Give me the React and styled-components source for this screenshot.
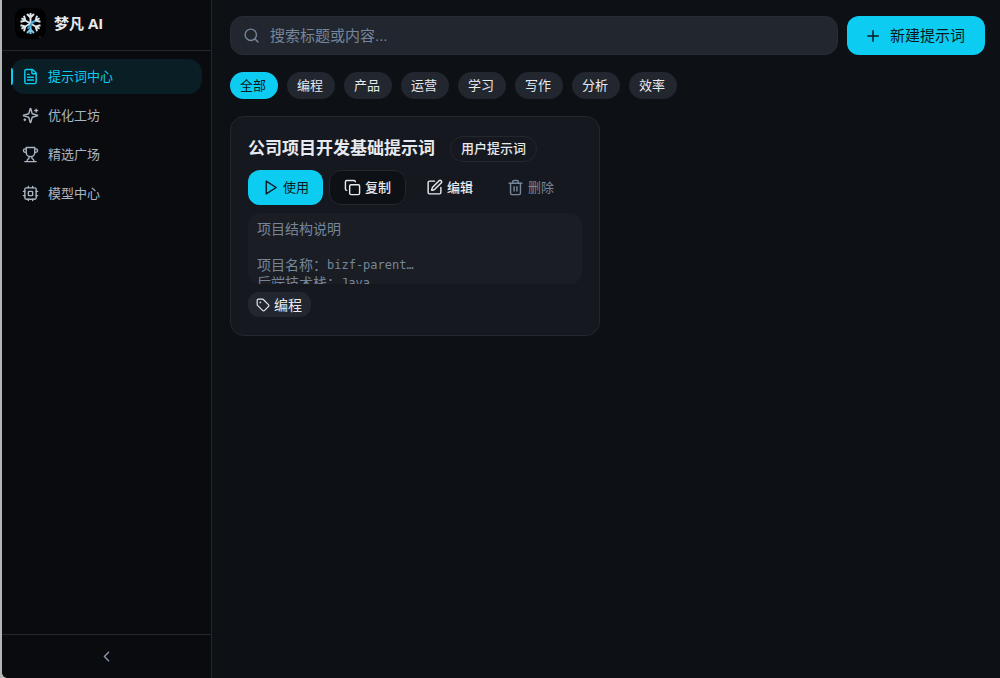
import React, { useState } from "react";
import styled, { createGlobalStyle, css } from "styled-components";
import {
  ChevronLeft,
  Copy,
  FileText,
  Plus,
  Search,
  SquarePen,
  Tag,
  Trash2,
} from "lucide-react";

const color = {
  background: "#0d1015",
  sidebar: "#0a0b0f",
  card: "#15181f",
  inset: "#1a1d24",
  muted: "#22262f",
  border: "#24272e",
  primary: "#0dccf2",
  onPrimary: "#0a1a20",
  text: "#e7eaee",
  navText: "#a9b4c2",
  subtle: "#75869b",
};

const GlobalStyle = createGlobalStyle`
  *, *::before, *::after { box-sizing: border-box; }
  body {
    margin: 0;
    background: #b4b5b5;
    color: ${color.text};
    font-family: "Liberation Sans", "Noto Sans CJK SC", sans-serif;
    font-size: 13px;
    line-height: 18px;
  }
  button, input { font: inherit; color: inherit; }
  button { cursor: pointer; }
  svg { flex: none; }
`;

const Shell = styled.div`
  display: flex;
  min-height: 100vh;
  margin-left: 2px;
  overflow: hidden;
  border-bottom-left-radius: 6px;
  background: ${color.background};
`;

const Sidebar = styled.aside`
  display: flex;
  flex: none;
  flex-direction: column;
  width: 210px;
  border-right: 1px solid ${color.border};
  background: ${color.sidebar};
`;

const Brand = styled.header`
  display: flex;
  align-items: center;
  gap: 8px;
  height: 51px;
  padding: 0 13px 4px;
  border-bottom: 1px solid ${color.border};
`;

const BrandMark = styled.svg`
  width: 31px;
  height: 31px;
  border-radius: 9px;
  background: #000;
`;

const BrandName = styled.span`
  font-family: "Open Sans", "Noto Sans CJK SC", sans-serif;
  font-size: 15px;
  font-weight: 700;
`;

const Nav = styled.nav`
  display: flex;
  flex: 1;
  flex-direction: column;
  gap: 4px;
  padding: 8px 9px;
`;

const NavLink = styled.a`
  position: relative;
  display: flex;
  align-items: center;
  gap: 9px;
  height: 35px;
  padding: 0 11px;
  border-radius: 14px;
  color: ${color.navText};
  text-decoration: none;

  ${({ $active }) =>
    $active &&
    css`
      background: #0a1e25;
      color: ${color.primary};

      &::before {
        content: "";
        position: absolute;
        left: 0;
        width: 2px;
        height: 17px;
        border-radius: 0 2px 2px 0;
        background: ${color.primary};
      }
    `}
`;

const SidebarFooter = styled.footer`
  display: flex;
  height: 44px;
  border-top: 1px solid ${color.border};
`;

const CollapseButton = styled.button`
  display: flex;
  flex: 1;
  align-items: center;
  justify-content: center;
  padding: 0;
  border: 0;
  background: none;
  color: #8796a8;
`;

const Main = styled.main`
  flex: 1;
  min-width: 0;
  padding: 16px 15px 16px 18px;
`;

const Toolbar = styled.div`
  display: flex;
  gap: 9px;
`;

const SearchField = styled.label`
  display: flex;
  flex: 1;
  align-items: center;
  gap: 10px;
  height: 39px;
  padding: 0 12px;
  border: 1px solid #282c34;
  border-radius: 13px;
  background: ${color.muted};
  color: ${color.subtle};
`;

const SearchInput = styled.input`
  flex: 1;
  min-width: 0;
  padding: 0;
  border: 0;
  outline: 0;
  background: none;
  color: ${color.text};
  font-size: 15px;

  &::placeholder {
    color: ${color.subtle};
    opacity: 1;
  }
`;

const CreateButton = styled.button`
  display: flex;
  align-items: center;
  justify-content: center;
  gap: 8px;
  height: 39px;
  padding: 0 20px 0 17px;
  border: 0;
  border-radius: 12px;
  background: ${color.primary};
  color: ${color.onPrimary};
  font-size: 15px;
`;

const Filters = styled.div`
  display: flex;
  flex-wrap: wrap;
  gap: 9px;
  margin: 17px 0;
`;

const Chip = styled.button`
  height: 27px;
  padding: 0 12px 0 10px;
  border: 0;
  border-radius: 14px;
  background: ${({ $active }) => ($active ? color.primary : color.muted)};
  color: ${({ $active }) => ($active ? color.onPrimary : color.text)};
`;

const CardGrid = styled.section`
  display: grid;
  grid-template-columns: repeat(2, minmax(0, 1fr));
  gap: 15px;
`;

const Card = styled.article`
  display: flex;
  flex-direction: column;
  gap: 8px;
  padding: 18px 17px;
  border: 1px solid ${color.border};
  border-radius: 14px;
  background: ${color.card};
`;

const CardHeader = styled.div`
  display: flex;
  align-items: center;
  gap: 15px;
  height: 27px;
`;

const CardTitle = styled.h2`
  margin: 0;
  font-size: 17px;
  font-weight: 700;
  line-height: 26px;
`;

const Badge = styled.span`
  padding: 3px 10px;
  border: 1px solid ${color.border};
  border-radius: 13px;
  font-weight: 500;
`;

const Actions = styled.div`
  display: flex;
  gap: 6px;
`;

const actionTone = {
  primary: css`
    background: ${color.primary};
    color: ${color.onPrimary};
  `,
  outline: css`
    border: 1px solid ${color.border};
    background: #0d1014;
    font-weight: 500;
  `,
  ghost: css`
    background: none;
    font-weight: 500;
  `,
  quiet: css`
    background: none;
    color: ${color.subtle};
  `,
};

const ActionButton = styled.button`
  display: flex;
  align-items: center;
  gap: 4px;
  height: 35px;
  padding: 0 14px;
  border: 0;
  border-radius: 12px;
  ${({ $tone }) => actionTone[$tone]}
`;

const Preview = styled.div`
  height: 71px;
  padding: 7px 9px;
  overflow: hidden;
  border-radius: 12px;
  background: ${color.inset};
  color: ${color.subtle};
`;

const PreviewLine = styled.p`
  display: flex;
  height: 18px;
  margin: 0;
  font-size: 14px;
  line-height: 18px;
`;

const Code = styled.code`
  font-family: "DejaVu Sans Mono", monospace;
  font-size: 12px;
`;

const CardTag = styled.span`
  display: flex;
  align-items: center;
  align-self: flex-start;
  gap: 4px;
  height: 25px;
  padding: 0 9px 0 8px;
  border-radius: 11px;
  background: ${color.muted};
  font-size: 14px;
`;

function Outline({ size, children }) {
  return (
    <svg
      width={size}
      height={size}
      viewBox="0 0 24 24"
      fill="none"
      stroke="currentColor"
      strokeWidth="2"
      strokeLinecap="round"
      strokeLinejoin="round"
      aria-hidden="true"
    >
      {children}
    </svg>
  );
}

const PlayIcon = ({ size }) => (
  <Outline size={size}>
    <polygon points="6 3 20 12 6 21 6 3" />
  </Outline>
);

const SparklesIcon = ({ size }) => (
  <Outline size={size}>
    <path d="M9.937 15.5A2 2 0 0 0 8.5 14.063l-6.135-1.582a.5.5 0 0 1 0-.962L8.5 9.936A2 2 0 0 0 9.937 8.5l1.582-6.135a.5.5 0 0 1 .963 0L14.063 8.5A2 2 0 0 0 15.5 9.937l6.135 1.581a.5.5 0 0 1 0 .964L15.5 14.063a2 2 0 0 0-1.437 1.437l-1.582 6.135a.5.5 0 0 1-.963 0z" />
    <path d="M20 3v4M22 5h-4M4 17v2M5 18H3" />
  </Outline>
);

const TrophyIcon = ({ size }) => (
  <Outline size={size}>
    <path d="M6 9H4.5a2.5 2.5 0 0 1 0-5H6M18 9h1.5a2.5 2.5 0 0 0 0-5H18M4 22h16" />
    <path d="M10 14.66V17c0 .55-.47.98-.97 1.21C7.85 18.75 7 20.24 7 22M14 14.66V17c0 .55.47.98.97 1.21C16.15 18.75 17 20.24 17 22" />
    <path d="M18 2H6v7a6 6 0 0 0 12 0V2Z" />
  </Outline>
);

const ChipIcon = ({ size }) => (
  <Outline size={size}>
    <rect width="16" height="16" x="4" y="4" rx="2" />
    <rect width="6" height="6" x="9" y="9" rx="1" />
    <path d="M15 2v2M15 20v2M2 15h2M2 9h2M20 15h2M20 9h2M9 2v2M9 20v2" />
  </Outline>
);

const navItems = [
  { label: "提示词中心", icon: FileText },
  { label: "优化工坊", icon: SparklesIcon },
  { label: "精选广场", icon: TrophyIcon },
  { label: "模型中心", icon: ChipIcon },
];

const categories = ["全部", "编程", "产品", "运营", "学习", "写作", "分析", "效率"];

const actions = [
  { label: "使用", icon: PlayIcon, tone: "primary" },
  { label: "复制", icon: Copy, tone: "outline" },
  { label: "编辑", icon: SquarePen, tone: "ghost" },
  { label: "删除", icon: Trash2, tone: "quiet" },
];

const previewLines = [
  { text: "项目结构说明" },
  { text: "" },
  { text: "项目名称：", code: "bizf-parent…" },
  { text: "后端技术栈：", code: "Java" },
];

function Snowflake() {
  return (
    <BrandMark viewBox="0 0 62 62" aria-hidden="true">
      <defs>
        <path id="arm" d="M31 31V10M24 12l7 7 7-7" />
      </defs>
      <g fill="none" strokeWidth="4">
        {[0, 60, 120, 180, 240, 300].map((angle) => (
          <use
            key={angle}
            href="#arm"
            stroke={angle === 180 ? "#7cc8e6" : "#dce5e9"}
            transform={`rotate(${angle} 31 31)`}
          />
        ))}
      </g>
      <path d="M25 41c6-2 5-7 8-10s5-3 7-6" fill="none" stroke="#3aa6d6" strokeWidth="4" />
      <circle cx="50" cy="58" r="1" fill="#aaa" />
    </BrandMark>
  );
}

export default function App() {
  const [category, setCategory] = useState(categories[0]);
  const [query, setQuery] = useState("");

  return (
    <>
      <GlobalStyle />
      <Shell>
        <Sidebar>
          <Brand>
            <Snowflake />
            <BrandName>梦凡 AI</BrandName>
          </Brand>
          <Nav>
            {navItems.map(({ label, icon: Icon }, index) => (
              <NavLink key={label} href="#" $active={index === 0}>
                <Icon size={17} />
                {label}
              </NavLink>
            ))}
          </Nav>
          <SidebarFooter>
            <CollapseButton type="button" aria-label="收起侧边栏">
              <ChevronLeft size={17} />
            </CollapseButton>
          </SidebarFooter>
        </Sidebar>

        <Main>
          <Toolbar>
            <SearchField>
              <Search size={17} />
              <SearchInput
                type="text"
                aria-label="搜索"
                placeholder="搜索标题或内容..."
                value={query}
                onChange={(event) => setQuery(event.target.value)}
              />
            </SearchField>
            <CreateButton type="button">
              <Plus size={18} />
              新建提示词
            </CreateButton>
          </Toolbar>

          <Filters>
            {categories.map((name) => (
              <Chip
                key={name}
                type="button"
                $active={name === category}
                onClick={() => setCategory(name)}
              >
                {name}
              </Chip>
            ))}
          </Filters>

          <CardGrid>
            <Card>
              <CardHeader>
                <CardTitle>公司项目开发基础提示词</CardTitle>
                <Badge>用户提示词</Badge>
              </CardHeader>
              <Actions>
                {actions.map(({ label, icon: Icon, tone }) => (
                  <ActionButton key={label} type="button" $tone={tone}>
                    <Icon size={17} />
                    {label}
                  </ActionButton>
                ))}
              </Actions>
              <Preview>
                {previewLines.map(({ text, code }, index) => (
                  <PreviewLine key={index}>
                    {text}
                    {code && <Code>{code}</Code>}
                  </PreviewLine>
                ))}
              </Preview>
              <CardTag>
                <Tag size={14} />
                编程
              </CardTag>
            </Card>
          </CardGrid>
        </Main>
      </Shell>
    </>
  );
}
